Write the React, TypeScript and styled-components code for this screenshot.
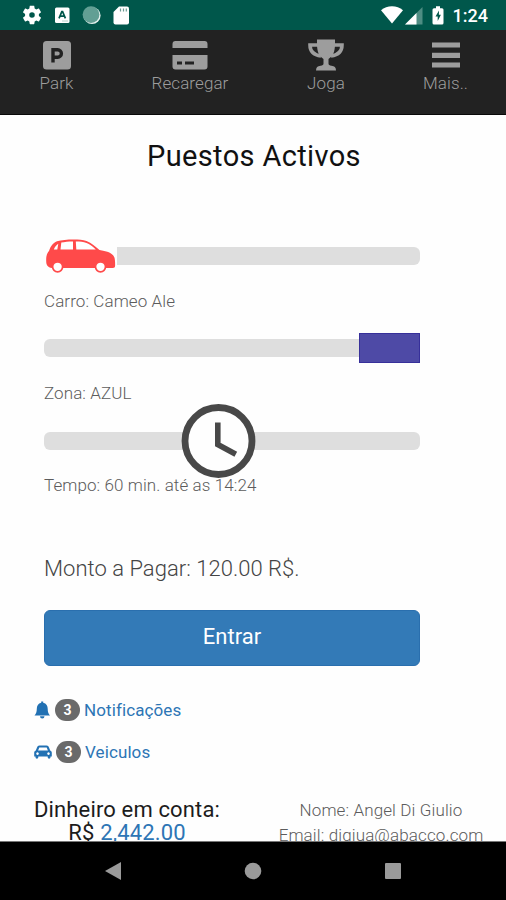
import React from "react";
import styled, { createGlobalStyle } from "styled-components";

const GlobalStyle = createGlobalStyle`
  * { box-sizing: border-box; }
  body { margin: 0; font-family: Roboto, "Liberation Sans", sans-serif; background: #fff; }
`;

const Screen = styled.div`
  width: 506px;
  height: 900px;
  display: flex;
  flex-direction: column;
  overflow: hidden;
  background: #fefefe;
`;

const StatusBar = styled.header`
  height: 30px;
  flex: none;
  display: flex;
  align-items: center;
  justify-content: space-between;
  padding: 0 18px 0 22px;
  background: #00574b;
  color: #fff;
`;

const StatusGroup = styled.div`
  display: flex;
  align-items: center;
  gap: 8px;
  svg { display: block; }
`;

const Clock = styled.span`
  margin-left: 1px;
  font-size: 18px;
  line-height: 30px;
  font-weight: 500;
  padding-top: 2px;
`;

const TopNav = styled.nav`
  height: 85px;
  flex: none;
  display: grid;
  grid-template-columns: 113px 154px 118px 121px;
  background: #222;
  border-bottom: 1px solid #090909;
`;

const NavItem = styled.a`
  display: flex;
  flex-direction: column;
  align-items: center;
  padding-top: 7px;
  color: #9d9d9d;
  svg { display: block; }
`;

const NavLabel = styled.span`
  font-size: 17px;
  line-height: 21px;
  font-weight: 300;
  letter-spacing: 0.08px;
  white-space: nowrap;
`;

const Content = styled.main`
  flex: 1;
  min-height: 0;
  overflow: hidden;
  display: flex;
  flex-direction: column;
  border-bottom: 1px solid #777;
`;

const Title = styled.h1`
  margin: 24px 0 46px;
  padding-left: 2px;
  height: 34px;
  flex: none;
  font-size: 29px;
  line-height: 35px;
  font-weight: 400;
  letter-spacing: 0.36px;
  text-align: center;
  color: #111;
  white-space: nowrap;
`;

const Panel = styled.section`
  width: 376px;
  flex: none;
  margin-left: 44px;
`;

const SliderBox = styled.div`
  height: 74px;
  display: grid;
  align-items: center;
  > * { grid-area: 1 / 1; }
`;

const Track = styled.div`
  height: 18px;
  border-radius: 6px;
  background: #dedede;
`;

const Thumb = styled.div<{ $offset: number }>`
  justify-self: start;
  margin-left: ${(p) => p.$offset}px;
  svg { display: block; }
`;

const CarThumb = styled(Thumb)`
  width: 73px;
  padding-left: 1px;
  background: #fefefe;
`;

const ZoneThumb = styled(Thumb)`
  width: 61px;
  height: 30px;
  background: #4e4aa6;
  border: 1px solid #37309a;
`;

const SliderLabel = styled.div`
  height: 18px;
  font-size: 17px;
  line-height: 16px;
  font-weight: 300;
  letter-spacing: 0.09px;
  color: #5c5c5c;
  white-space: nowrap;
`;

const Amount = styled.p`
  margin: 58px 0 25px;
  font-size: 22px;
  line-height: 32px;
  font-weight: 300;
  letter-spacing: 0.03px;
  color: #444;
  white-space: nowrap;
`;

const Button = styled.button`
  display: block;
  width: 100%;
  height: 56px;
  padding: 0 0 2px;
  border: 1px solid #2a6fae;
  border-radius: 6px;
  background: #337ab7;
  color: #fff;
  font: 400 22px/50px Roboto, sans-serif;
`;

const Links = styled.div`
  flex: none;
  margin: 23px 0 0 34px;
`;

const LinkRow = styled.a`
  height: 42px;
  display: flex;
  align-items: center;
  color: #2d75b5;
  font-size: 17px;
  letter-spacing: 0.1px;
  svg { flex: none; }
`;

const Badge = styled.span`
  width: 25px;
  height: 22px;
  margin: 0 4px 0 4px;
  border-radius: 11px;
  background: #6a6a6a;
  color: #fff;
  font-size: 14px;
  line-height: 22px;
  font-weight: 700;
  text-align: center;
`;

const Footer = styled.footer`
  flex: none;
  display: flex;
  margin-top: 25px;
`;

const Balance = styled.div`
  width: 254px;
  font-size: 22px;
  line-height: 23px;
  letter-spacing: 0.15px;
  text-align: center;
  color: #1c1c1c;
  white-space: nowrap;
  b { font-weight: 400; color: #2d75b5; }
`;

const Owner = styled.div`
  width: 252px;
  padding-left: 2px;
  font-size: 17px;
  line-height: 25px;
  font-weight: 300;
  letter-spacing: 0.12px;
  text-align: center;
  color: #5c5c5c;
  white-space: nowrap;
`;

const SystemNav = styled.div`
  height: 58px;
  flex: none;
  display: grid;
  grid-template-columns: repeat(3, 140px);
  justify-content: center;
  align-items: center;
  justify-items: center;
  background: #000;
`;

const GearIcon = () => (
  <svg width="20" height="20" viewBox="1.200 1.200 21.600 21.600">
    <path fill="#fff" d="M19.43 12.98c.04-.32.07-.64.07-.98s-.03-.66-.07-.98l2.11-1.65c.19-.15.24-.42.12-.64l-2-3.46c-.12-.22-.39-.3-.61-.22l-2.49 1c-.52-.4-1.08-.73-1.69-.98l-.38-2.65C14.46 2.18 14.25 2 14 2h-4c-.25 0-.46.18-.49.42l-.38 2.65c-.61.25-1.17.59-1.69.98l-2.49-1c-.23-.09-.49 0-.61.22l-2 3.46c-.13.22-.07.49.12.64l2.11 1.65c-.04.32-.07.65-.07.98s.03.66.07.98l-2.11 1.65c-.19.15-.24.42-.12.64l2 3.46c.12.22.39.3.61.22l2.49-1c.52.4 1.08.73 1.69.98l.38 2.65c.03.24.24.42.49.42h4c.25 0 .46-.18.49-.42l.38-2.65c.61-.25 1.17-.59 1.69-.98l2.49 1c.23.09.49 0 .61-.22l2-3.46c.12-.22.07-.49-.12-.64l-2.11-1.65zM12 15a3 3 0 1 1 0-6 3 3 0 0 1 0 6z" />
  </svg>
);

const NotificationIcons = () => (
  <svg width="80" height="24" viewBox="50 3 80 24">
    <rect x="55" y="7.500" width="14.500" height="15.500" rx="1.500" fill="#fff" />
    <path d="M59 18.300l2.800-6.600h.8l2.800 6.600M60 16.200h4.400" fill="none" stroke="#00574b" strokeWidth="1.700" />
    <path d="M62 21h6" stroke="#b6cfca" strokeWidth="1" />
    <circle cx="92" cy="15.500" r="8.600" fill="#e4f0ed" />
    <circle cx="91" cy="14.600" r="8.400" fill="#629f94" />
    <path d="M119 6.500h8a2 2 0 0 1 2 2v14a2 2 0 0 1-2 2h-11.500a2 2 0 0 1-2-2V12z" fill="#fff" />
    <path d="M120.500 8.500v3M123.500 8.500v3M126.300 8.500v3" stroke="#6d9c94" strokeWidth="1.200" />
  </svg>
);

const SignalIcons = () => (
  <svg width="64" height="24" viewBox="380 3 64 24">
    <path d="M381 10.300C387 5 397 5 403 10.300L392 23.500z" fill="#fff" />
    <path d="M422.500 7v17.500H405z" fill="#4e8d83" />
    <path d="M416.500 13v11.500H405z" fill="#fff" />
    <path d="M434 8.200h2V6.200h4v2h2a1.500 1.500 0 0 1 1.500 1.500v13.300a1.500 1.500 0 0 1-1.500 1.500h-8a1.500 1.500 0 0 1-1.500-1.500V9.700a1.500 1.500 0 0 1 1.500-1.500z" fill="#fff" />
    <path d="M439 10.500l-3.500 6h2.200v4.500l3.200-6.200h-2z" fill="#00574b" />
  </svg>
);

const ParkIcon = () => (
  <svg width="36" height="36" viewBox="0 0 36 36">
    <rect x="4" y="4" width="28" height="28.500" rx="3.500" fill="#9d9d9d" />
    <path d="M14 25.500V12.800h4.700a3.700 3.700 0 0 1 0 7.400H14" fill="none" stroke="#222" strokeWidth="3.400" />
  </svg>
);

const CardIcon = () => (
  <svg width="36" height="36" viewBox="0 0 36 36">
    <path d="M3.500 4h29A3 3 0 0 1 35.500 7v4H.5V7a3 3 0 0 1 3-3zM.5 18h35v11.500a3 3 0 0 1-3 3h-29a3 3 0 0 1-3-3z" fill="#9d9d9d" />
    <path d="M5 26h5M13 26h9" stroke="#222" strokeWidth="3" />
  </svg>
);

const TrophyIcon = () => (
  <svg width="36" height="36" viewBox="0 0 36 36">
    <path d="M10 8H2c0 6 4 10 11 11M26 8h8c0 6-4 10-11 11" fill="none" stroke="#9d9d9d" strokeWidth="3.600" />
    <path d="M9 2.500h18V7c0 8-2 12-6.500 15v4.500c0 1.500 1 2 3 2.200 3 .3 4.500 1.500 4.500 4.800H8c0-3.300 1.500-4.500 4.500-4.800 2-.2 3-.7 3-2.200V22C11 19 9 15 9 7z" fill="#9d9d9d" />
  </svg>
);

const MenuIcon = () => (
  <svg width="36" height="36" viewBox="0 0 36 36">
    <path d="M4 8h28M4 18.300h28M4 28h28" stroke="#9d9d9d" strokeWidth="5.200" />
  </svg>
);

const RedCar = () => (
  <svg width="72" height="36" viewBox="45 238 72 36">
    <path d="M46.200 261c-.2-5 .8-7.500 2.800-10 1.500-4.500 3.500-8 8-9.800 8-2 22-2.600 29.500-.2 5 2 9 5.500 13 9 7.500 1.200 12.500 2.800 14.700 7 .8 1.800 1 5 .9 9 0 1.300-.8 1.800-2.200 2H52c-4.500-.5-5.800-3-5.800-7z" fill="#ff4a4a" />
    <path d="M61.300 242.600c3.300-.9 7.200-1.100 11.700-1.200v8.100H60.500zM75.800 241.400c8.500 0 13.500 1.500 20 8H76.300zM58.300 243.800l-1 5.700h-3.500c1-2.500 2.300-4.300 4.500-5.700z" fill="#fff" />
    {[57.6, 100.5].map((x) => (
      <circle key={x} cx={x} cy="266.800" r="5" fill="#fff" stroke="#ff4a4a" strokeWidth="1.700" />
    ))}
  </svg>
);

const ClockIcon = () => (
  <svg width="75" height="75" viewBox="0 0 75 75">
    <circle cx="37.500" cy="38" r="33.500" fill="#fefefe" stroke="#484848" strokeWidth="6.800" />
    <path d="M36.800 19.500v22l18 9.800" fill="none" stroke="#484848" strokeWidth="5.600" />
  </svg>
);

const BellIcon = () => (
  <svg width="17" height="20" viewBox="0 0 17 20">
    <path d="M7.200 2.800V1.500h2v1.300c3.200.7 4.500 3 4.500 6 0 3.500.8 5 2.300 6.700H.5c1.500-1.700 2.300-3.200 2.300-6.700 0-3 1.300-5.300 4.400-6zM6 16.200h4.500a2.200 2.200 0 0 1-4.500 0z" fill="#2271b3" />
  </svg>
);

const SmallCarIcon = () => (
  <svg width="18" height="18" viewBox="0 0 18 18">
    <path fillRule="evenodd" d="M5.500 2.500h7c1.500 0 2 .8 2.500 2l1.200 3c1.200.4 1.600 1.200 1.600 2.500v3.500h-1.300v.8a1.300 1.300 0 0 1-2.800 0v-.8H4.300v.8a1.300 1.300 0 0 1-2.800 0v-.8H.2V10c0-1.300.4-2.100 1.600-2.500l1.200-3c.5-1.200 1-2 2.500-2zM5.300 4.500l-1.200 3h9.800l-1.200-3zM3.500 9.300a1.300 1.300 0 1 0 .01 0zM14.500 9.300a1.300 1.300 0 1 0 .01 0z" fill="#2271b3" />
  </svg>
);

export default function App() {
  return (
    <>
      <GlobalStyle />
      <Screen>
        <StatusBar>
          <StatusGroup>
            <GearIcon />
            <NotificationIcons />
          </StatusGroup>
          <StatusGroup>
            <SignalIcons />
            <Clock>1:24</Clock>
          </StatusGroup>
        </StatusBar>
        <TopNav>
          <NavItem><ParkIcon /><NavLabel>Park</NavLabel></NavItem>
          <NavItem><CardIcon /><NavLabel>Recaregar</NavLabel></NavItem>
          <NavItem><TrophyIcon /><NavLabel>Joga</NavLabel></NavItem>
          <NavItem><MenuIcon /><NavLabel>Mais..</NavLabel></NavItem>
        </TopNav>
        <Content>
          <Title>Puestos Activos</Title>
          <Panel>
            <SliderBox><Track /><CarThumb $offset={0}><RedCar /></CarThumb></SliderBox>
            <SliderLabel>Carro: Cameo Ale</SliderLabel>
            <SliderBox><Track /><ZoneThumb $offset={315} /></SliderBox>
            <SliderLabel>Zona: AZUL</SliderLabel>
            <SliderBox><Track /><Thumb $offset={137}><ClockIcon /></Thumb></SliderBox>
            <SliderLabel>Tempo: 60 min. até as 14:24</SliderLabel>
            <Amount>Monto a Pagar: 120.00 R$.</Amount>
            <Button>Entrar</Button>
          </Panel>
          <Links>
            <LinkRow><BellIcon /><Badge>3</Badge>Notificações</LinkRow>
            <LinkRow><SmallCarIcon /><Badge>3</Badge>Veiculos</LinkRow>
          </Links>
          <Footer>
            <Balance>Dinheiro em conta:<br />R$ <b>2,442.00</b></Balance>
            <Owner>Nome: Angel Di Giulio<br />Email: digiua@abacco.com</Owner>
          </Footer>
        </Content>
        <SystemNav>
          <svg width="18" height="20" viewBox="0 0 18 20"><path d="M17 1v18L1 10z" fill="#9a9a9a" /></svg>
          <svg width="18" height="18" viewBox="0 0 18 18"><circle cx="9" cy="9" r="8.300" fill="#9a9a9a" /></svg>
          <svg width="16" height="16" viewBox="0 0 16 16"><rect width="16" height="16" rx="1" fill="#9a9a9a" /></svg>
        </SystemNav>
      </Screen>
    </>
  );
}
